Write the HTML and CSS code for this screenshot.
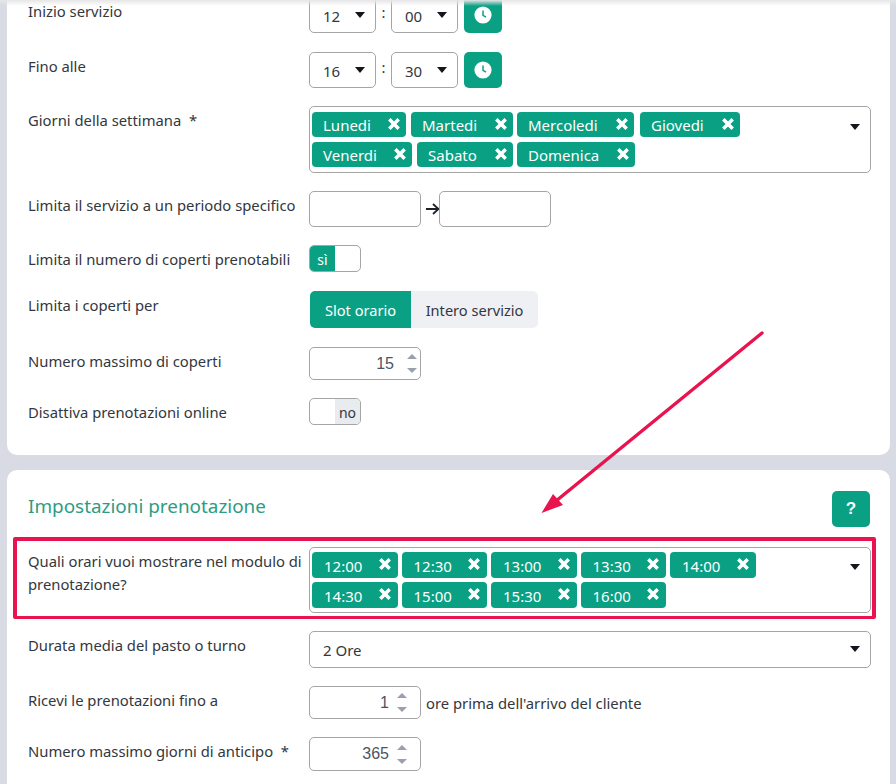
FILE: index.html
```html
<!DOCTYPE html>
<html lang="en">
<head>
  <meta charset="UTF-8" />
  <title>Impostazioni servizio</title>
  <meta name="viewport" content="width=device-width, initial-scale=1.0" />
  <link rel="stylesheet" href="styles.css">
</head>
<body>

  <div class="page">
    <div class="top-shadow"></div>

    <section class="card card-service">
      <div class="row row-first">
        <div class="label">Inizio servizio</div>
        <div class="field time-field">
          <div class="select select-time"><span>12</span><i class="caret"></i></div>
          <span class="colon">:</span>
          <div class="select select-time"><span>00</span><i class="caret"></i></div>
          <button class="clock-btn">
            <svg width="18" height="18" viewBox="0 0 18 18"><circle cx="9" cy="9" r="8.6" fill="#fff"/><path d="M9 4.5V9.4L12 11.2" fill="none" stroke="#0aa083" stroke-width="1.5"/></svg>
          </button>
        </div>
      </div>

      <div class="row">
        <div class="label">Fino alle</div>
        <div class="field time-field">
          <div class="select select-time"><span>16</span><i class="caret"></i></div>
          <span class="colon">:</span>
          <div class="select select-time"><span>30</span><i class="caret"></i></div>
          <button class="clock-btn">
            <svg width="18" height="18" viewBox="0 0 18 18"><circle cx="9" cy="9" r="8.6" fill="#fff"/><path d="M9 4.5V9.4L12 11.2" fill="none" stroke="#0aa083" stroke-width="1.5"/></svg>
          </button>
        </div>
      </div>

      <div class="row">
        <div class="label">Giorni della settimana &nbsp;*</div>
        <div class="field multi multi-days">
          <div class="chips">
            <div class="chip-row">
              <span class="chip chip-lunedi">Lunedi<svg class="x" viewBox="0 0 12 12"><path d="M2 2L10 10M10 2L2 10"/></svg></span>
              <span class="chip chip-martedi">Martedi<svg class="x" viewBox="0 0 12 12"><path d="M2 2L10 10M10 2L2 10"/></svg></span>
              <span class="chip chip-mercoledi">Mercoledi<svg class="x" viewBox="0 0 12 12"><path d="M2 2L10 10M10 2L2 10"/></svg></span>
              <span class="chip chip-giovedi">Giovedi<svg class="x" viewBox="0 0 12 12"><path d="M2 2L10 10M10 2L2 10"/></svg></span>
            </div>
            <div class="chip-row">
              <span class="chip chip-venerdi">Venerdi<svg class="x" viewBox="0 0 12 12"><path d="M2 2L10 10M10 2L2 10"/></svg></span>
              <span class="chip chip-sabato">Sabato<svg class="x" viewBox="0 0 12 12"><path d="M2 2L10 10M10 2L2 10"/></svg></span>
              <span class="chip chip-domenica">Domenica<svg class="x" viewBox="0 0 12 12"><path d="M2 2L10 10M10 2L2 10"/></svg></span>
            </div>
          </div>
          <i class="caret"></i>
        </div>
      </div>

      <div class="row">
        <div class="label">Limita il servizio a un periodo specifico</div>
        <div class="field date-field">
          <div class="date-input"></div>
          <svg class="date-arrow" width="18" height="14" viewBox="0 0 18 14"><path d="M5 7H17M12 2L17.500 7L12 12" fill="none" stroke="#1d2129" stroke-width="1.8"/></svg>
          <div class="date-input"></div>
        </div>
      </div>

      <div class="row row-toggle">
        <div class="label">Limita il numero di coperti prenotabili</div>
        <div class="field">
          <div class="toggle"><span class="toggle-on">sì</span><span class="toggle-blank"></span></div>
        </div>
      </div>

      <div class="row row-seg">
        <div class="label">Limita i coperti per</div>
        <div class="field">
          <div class="seg">
            <span class="seg-item seg-active">Slot orario</span>
            <span class="seg-item">Intero servizio</span>
          </div>
        </div>
      </div>

      <div class="row">
        <div class="label">Numero massimo di coperti</div>
        <div class="field">
          <div class="number number-wide"><span>15</span><div class="spin"><i class="up"></i><i class="down"></i></div></div>
        </div>
      </div>

      <div class="row">
        <div class="label">Disattiva prenotazioni online</div>
        <div class="field">
          <div class="toggle"><span class="toggle-blank"></span><span class="toggle-off">no</span></div>
        </div>
      </div>
    </section>

    <section class="card card-booking">
      <div class="card-head">
        <h2>Impostazioni prenotazione</h2>
        <button class="help-btn">?</button>
      </div>

      <div class="row row-marked">
        <div class="marker"></div>
        <div class="label">Quali orari vuoi mostrare nel modulo di prenotazione?</div>
        <div class="field multi multi-times">
          <div class="chips chips-time">
            <div class="chip-row">
              <span class="chip chip-time">12:00<svg class="x" viewBox="0 0 12 12"><path d="M2 2L10 10M10 2L2 10"/></svg></span>
              <span class="chip chip-time">12:30<svg class="x" viewBox="0 0 12 12"><path d="M2 2L10 10M10 2L2 10"/></svg></span>
              <span class="chip chip-time">13:00<svg class="x" viewBox="0 0 12 12"><path d="M2 2L10 10M10 2L2 10"/></svg></span>
              <span class="chip chip-time">13:30<svg class="x" viewBox="0 0 12 12"><path d="M2 2L10 10M10 2L2 10"/></svg></span>
              <span class="chip chip-time">14:00<svg class="x" viewBox="0 0 12 12"><path d="M2 2L10 10M10 2L2 10"/></svg></span>
            </div>
            <div class="chip-row">
              <span class="chip chip-time">14:30<svg class="x" viewBox="0 0 12 12"><path d="M2 2L10 10M10 2L2 10"/></svg></span>
              <span class="chip chip-time">15:00<svg class="x" viewBox="0 0 12 12"><path d="M2 2L10 10M10 2L2 10"/></svg></span>
              <span class="chip chip-time">15:30<svg class="x" viewBox="0 0 12 12"><path d="M2 2L10 10M10 2L2 10"/></svg></span>
              <span class="chip chip-time">16:00<svg class="x" viewBox="0 0 12 12"><path d="M2 2L10 10M10 2L2 10"/></svg></span>
            </div>
          </div>
          <i class="caret"></i>
        </div>
      </div>

      <div class="row">
        <div class="label">Durata media del pasto o turno</div>
        <div class="field">
          <div class="select select-full"><span>2 Ore</span><i class="caret"></i></div>
        </div>
      </div>

      <div class="row">
        <div class="label">Ricevi le prenotazioni fino a</div>
        <div class="field inline-field">
          <div class="number"><span>1</span><div class="spin"><i class="up"></i><i class="down"></i></div></div>
          <span class="suffix">ore prima dell'arrivo del cliente</span>
        </div>
      </div>

      <div class="row">
        <div class="label">Numero massimo giorni di anticipo &nbsp;*</div>
        <div class="field">
          <div class="number number-tall"><span>365</span><div class="spin"><i class="up"></i><i class="down"></i></div></div>
        </div>
      </div>
    </section>

    <svg class="arrow" width="896" height="784" viewBox="0 0 896 784">
      <path d="M762 333L556 501" fill="none" stroke="#e8134f" stroke-width="3.4" stroke-linecap="round"/>
      <path d="M541.500 513L553 494L563 505Z" fill="#e8134f"/>
    </svg>
  </div>

</body>
</html>
```

FILE: styles.css
```css
body {
  margin: 0;
  background: #d8dbe3;
  font-family: "Noto Sans", "Open Sans", sans-serif;
  font-size: 14.8px;
  color: #33373e;
}

.page {
  position: relative;
  width: 896px;
  height: 784px;
  overflow: hidden;
  box-sizing: border-box;
  padding: 0 6px 0 7px;
}

.top-shadow {
  position: absolute;
  top: 0;
  left: 0;
  right: 0;
  height: 6px;
  background: linear-gradient(#e6e6e8, rgba(255, 255, 255, 0));
  z-index: 2;
}

.arrow {
  position: absolute;
  top: 0;
  left: 0;
  z-index: 3;
}

.card {
  background: #fff;
  border-radius: 10px;
  padding: 0 19px 0 21px;
  display: flex;
  flex-direction: column;
  gap: 18px;
}

.card-service {
  margin-top: -3px;
  padding-bottom: 30px;
  border-top-left-radius: 0;
  border-top-right-radius: 0;
}

.card-booking {
  margin-top: 15px;
  padding-bottom: 40px;
}

.card-head {
  display: flex;
  justify-content: space-between;
  align-items: center;
  height: 36px;
  padding: 21px 1px 0 0;
  margin-bottom: 2px;
}

h2 {
  margin: -6px 0 0;
  font-size: 18.9px;
  font-weight: 400;
  color: #2d9c83;
}

.help-btn {
  width: 38px;
  height: 36px;
  border: none;
  border-radius: 5px;
  background: #0aa083;
  color: #fff;
  font-family: "Liberation Sans", sans-serif;
  font-size: 17px;
  font-weight: 700;
  padding: 0;
}

.row {
  display: grid;
  grid-template-columns: 281px 1fr;
}

.row-first,
.row-toggle,
.row-seg {
  margin-bottom: 1px;
}

.row-marked {
  position: relative;
}

.marker {
  position: absolute;
  top: -10px;
  right: -5px;
  bottom: -6px;
  left: -15px;
  border: 4px solid #e8134f;
  border-bottom-width: 3px;
  border-radius: 2px;
  pointer-events: none;
}

.label {
  padding: 3px 4px 0 0;
  line-height: 23px;
}

.field {
  min-width: 0;
}

.time-field {
  display: flex;
  align-items: center;
}

.select {
  display: flex;
  align-items: center;
  justify-content: space-between;
  box-sizing: border-box;
  height: 36px;
  border: 1px solid #a5a5a5;
  border-radius: 5px;
  background: #fff;
  font-size: 15px;
  padding: 2px 10px 0 13px;
}

.select-time {
  width: 67px;
}

.select-full {
  height: 37px;
  padding-top: 0;
}

.caret {
  display: block;
  width: 0;
  height: 0;
  margin-top: -2px;
  border-left: 5px solid transparent;
  border-right: 5px solid transparent;
  border-top: 6px solid #14161c;
}

.colon {
  width: 15px;
  text-align: center;
  margin-top: -6px;
}

.clock-btn {
  display: flex;
  align-items: center;
  justify-content: center;
  width: 38px;
  height: 36px;
  margin-left: 6px;
  padding: 0;
  border: none;
  border-radius: 5px;
  background: #0aa083;
}

.multi {
  display: flex;
  box-sizing: border-box;
  border: 1px solid #a5a5a5;
  border-radius: 5px;
  background: #fff;
}

.multi-days {
  height: 67px;
  padding: 5px 10px 0 2px;
}

.multi-times {
  height: 66px;
  padding: 4px 10px 0 2px;
}

.multi .caret {
  flex: none;
  margin-top: 12px;
}

.chips {
  flex: 1;
  display: flex;
  flex-direction: column;
  gap: 5px;
}

.chips-time {
  gap: 4px;
}

.chip-row {
  display: flex;
  gap: 4px;
}

.chip {
  display: flex;
  align-items: center;
  justify-content: space-between;
  box-sizing: border-box;
  height: 25px;
  padding: 0 5px 0 11px;
  border-radius: 4px;
  background: #0aa083;
  color: #fff;
  font-size: 15px;
}

.chip .x {
  width: 14px;
  height: 14px;
  margin-top: -2px;
  fill: none;
  stroke: #fff;
  stroke-width: 3;
}

.chip-lunedi { width: 94px; }
.chip-martedi { width: 102px; margin-left: 1px; }
.chip-mercoledi { width: 117px; }
.chip-giovedi { width: 100px; margin-left: 2px; }
.chip-venerdi { width: 100px; }
.chip-sabato { width: 96px; margin-left: 1px; }
.chip-domenica { width: 118px; }

.chip-time {
  width: 85.500px;
  height: 26px;
  padding: 2px 6px 0 12px;
}

.chip-time .x {
  margin-top: -5px;
}

.date-field {
  display: flex;
  align-items: center;
}

.date-input {
  box-sizing: border-box;
  width: 112px;
  height: 36px;
  border: 1px solid #a5a5a5;
  border-radius: 5px;
}

.date-arrow {
  width: 18px;
}

.toggle {
  display: flex;
  box-sizing: border-box;
  width: 52px;
  height: 27px;
  border: 1px solid #a5a5a5;
  border-radius: 5px;
  overflow: hidden;
  font-size: 14px;
}

.toggle span {
  flex: 1;
  text-align: center;
  line-height: 27px;
}

.toggle-on {
  background: #0aa083;
  color: #fff;
}

.toggle-off {
  background: #e9ecef;
}

.seg {
  display: flex;
  width: 228px;
  height: 37px;
  margin-left: 1px;
  border-radius: 5px;
  overflow: hidden;
  font-size: 14.6px;
  line-height: 38px;
}

.seg-item {
  flex: 1;
  text-align: center;
  background: #eef0f4;
}

.seg-active {
  flex: none;
  width: 101px;
  background: #0aa083;
  color: #fff;
}

.number {
  display: flex;
  align-items: center;
  justify-content: flex-end;
  box-sizing: border-box;
  width: 112px;
  height: 33px;
  border: 1px solid #a5a5a5;
  border-radius: 5px;
  padding-right: 13px;
  font-family: "Liberation Sans", sans-serif;
  font-size: 16px;
  color: #4b5563;
}

.number-wide {
  padding-right: 3px;
}

.number-wide .spin {
  margin-left: 13px;
}

.number-tall {
  height: 34px;
}

.spin {
  display: flex;
  flex-direction: column;
  gap: 9px;
  margin-left: 8px;
}

.spin i {
  display: block;
  width: 0;
  height: 0;
  border-left: 5px solid transparent;
  border-right: 5px solid transparent;
}

.spin .up {
  border-bottom: 5px solid #9aa0ad;
}

.spin .down {
  border-top: 5px solid #9aa0ad;
}

.inline-field {
  display: flex;
  align-items: center;
}

.suffix {
  margin-left: 5px;
}
```
